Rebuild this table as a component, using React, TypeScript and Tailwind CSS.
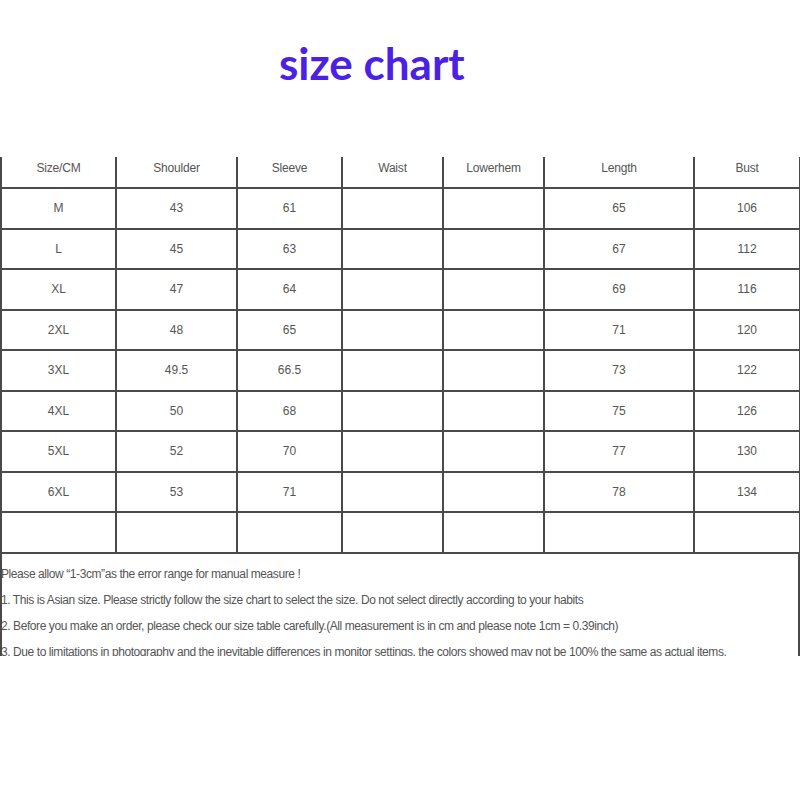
const columns = ["Size/CM", "Shoulder", "Sleeve", "Waist", "Lowerhem", "Length", "Bust"];

const rows: string[][] = [
  ["M", "43", "61", "", "", "65", "106"],
  ["L", "45", "63", "", "", "67", "112"],
  ["XL", "47", "64", "", "", "69", "116"],
  ["2XL", "48", "65", "", "", "71", "120"],
  ["3XL", "49.5", "66.5", "", "", "73", "122"],
  ["4XL", "50", "68", "", "", "75", "126"],
  ["5XL", "52", "70", "", "", "77", "130"],
  ["6XL", "53", "71", "", "", "78", "134"],
  ["", "", "", "", "", "", ""],
];

const notes = [
  "Please allow \u201c1-3cm\u201das the error range for manual measure !",
  "1. This is Asian size. Please strictly follow the size chart to select the size. Do not select directly according to your habits",
  "2. Before you make an order, please check our size table carefully.(All measurement is in cm and please note 1cm = 0.39inch)",
  "3. Due to limitations in photography and the inevitable differences in monitor settings, the colors showed may not be 100% the same as actual items.",
];

export default function App() {
  return (
    <div className="w-[800px] h-[800px] bg-white overflow-hidden font-['Liberation_Sans',Arial,sans-serif]">
      {/* Title */}
      <div className="h-[157px] pt-[39px] pl-[279px]">
        <h1 className="text-[44px] leading-[48px] font-bold text-[#4b22e4] font-['Lato',sans-serif]">
          size chart
        </h1>
      </div>

      {/* Table */}
      <div className="grid grid-cols-[113px_119px_103px_99px_99px_148px_104px] grid-rows-[30px_repeat(9,38.5px)] gap-[2px] bg-[#4a4a4a] px-[2px] pb-[2px] w-[800px]">
        {columns.map((c) => (
          <div key={c} className="bg-white flex justify-center pt-[4px] text-[12px] leading-[14px] text-[#555] tracking-[-0.2px]">
            {c}
          </div>
        ))}
        {rows.flatMap((r, i) =>
          r.map((v, j) => (
            <div key={`${i}-${j}`} className="bg-white flex items-center justify-center text-[12px] text-[#555]">
              {v}
            </div>
          ))
        )}
      </div>

      {/* Notes */}
      <div className="w-[800px] h-[102px] border-x-2 border-[#4a4a4a] overflow-hidden pt-[7px] text-[12px] leading-[26px] text-[#555] tracking-[-0.42px] whitespace-nowrap">
        {notes.map((n) => (
          <div key={n} className="-ml-[1px]">{n}</div>
        ))}
      </div>
    </div>
  );
}
